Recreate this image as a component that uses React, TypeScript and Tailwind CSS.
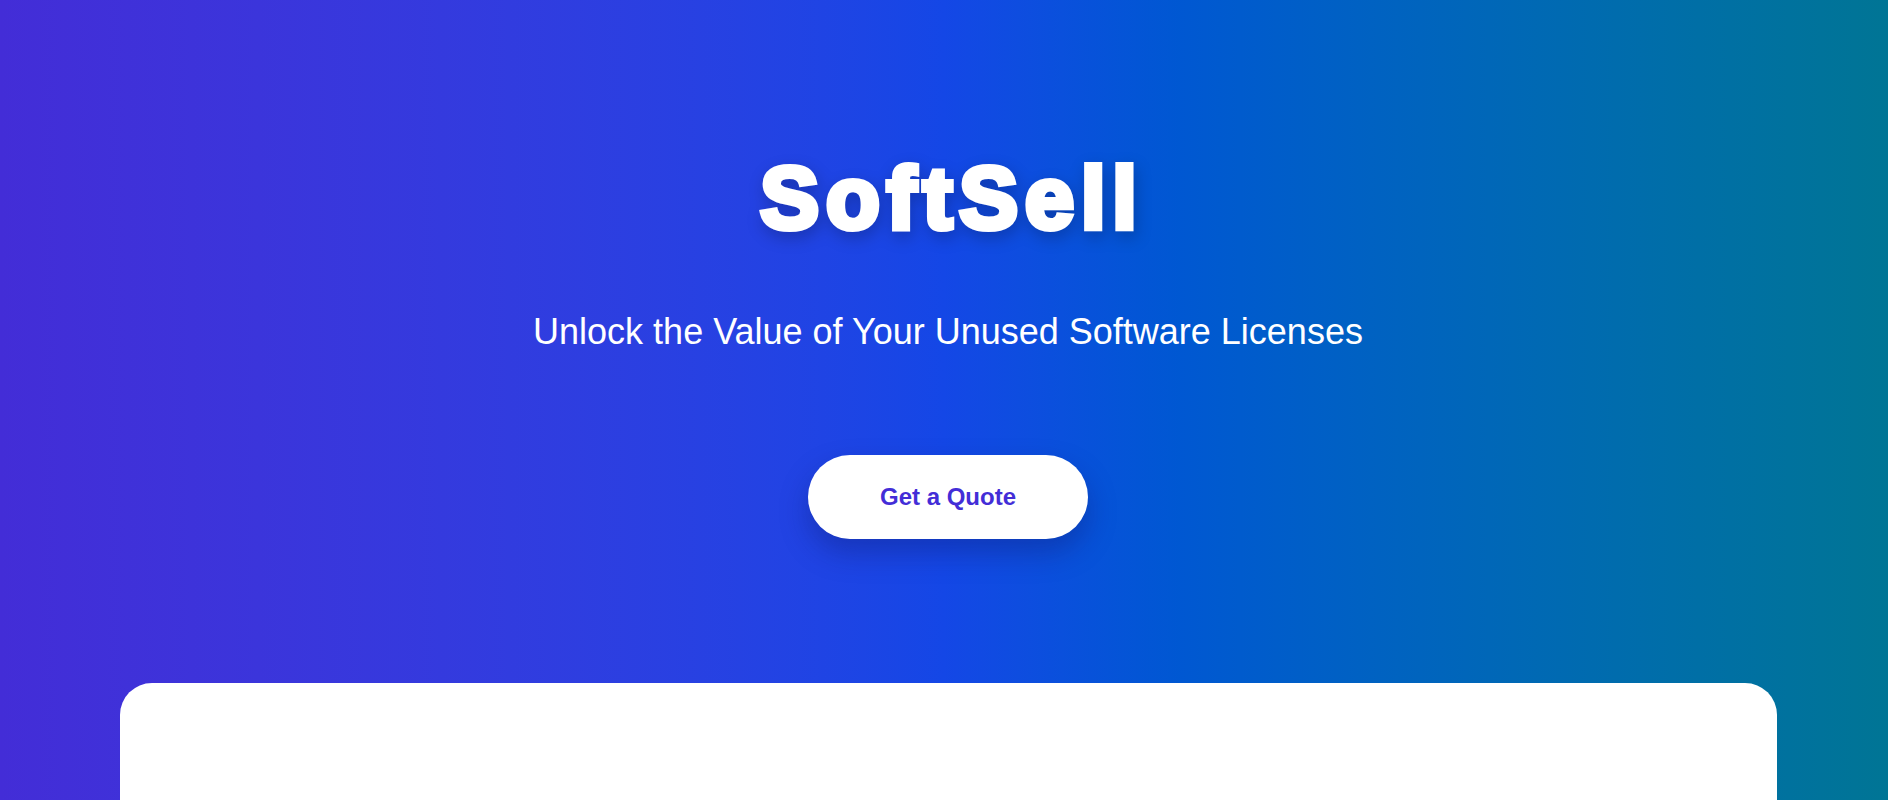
export default function App() {
  return (
    <div className="min-h-screen w-full overflow-hidden bg-linear-to-r from-[#432dd7] via-[#1447e6] to-[#007595] font-['Liberation_Sans',Arial,sans-serif]">
      <section className="flex flex-col items-center pl-2 pt-[148px] text-center text-white">
        <h1 className="pl-[8px] text-[88px] leading-[100px] font-bold tracking-[7px] [-webkit-text-stroke:6px_white] [paint-order:stroke_fill] drop-shadow-[2px_6px_8px_rgba(0,0,0,0.22)]">
          SoftSell
        </h1>
        <p className="mt-[62px] text-[36px] leading-[44px]">
          Unlock the Value of Your Unused Software Licenses
        </p>
        <button className="mt-[101px] h-[84px] w-[280px] rounded-full bg-white text-[24px] font-bold text-[#432dd7] shadow-[0_14px_28px_rgba(15,25,110,0.35)]">
          Get a Quote
        </button>
      </section>
      <div className="mt-[144px]">
        <div className="ml-[120px] mr-[111px] h-[200px] rounded-[32px] bg-white" />
      </div>
    </div>
  );
}
